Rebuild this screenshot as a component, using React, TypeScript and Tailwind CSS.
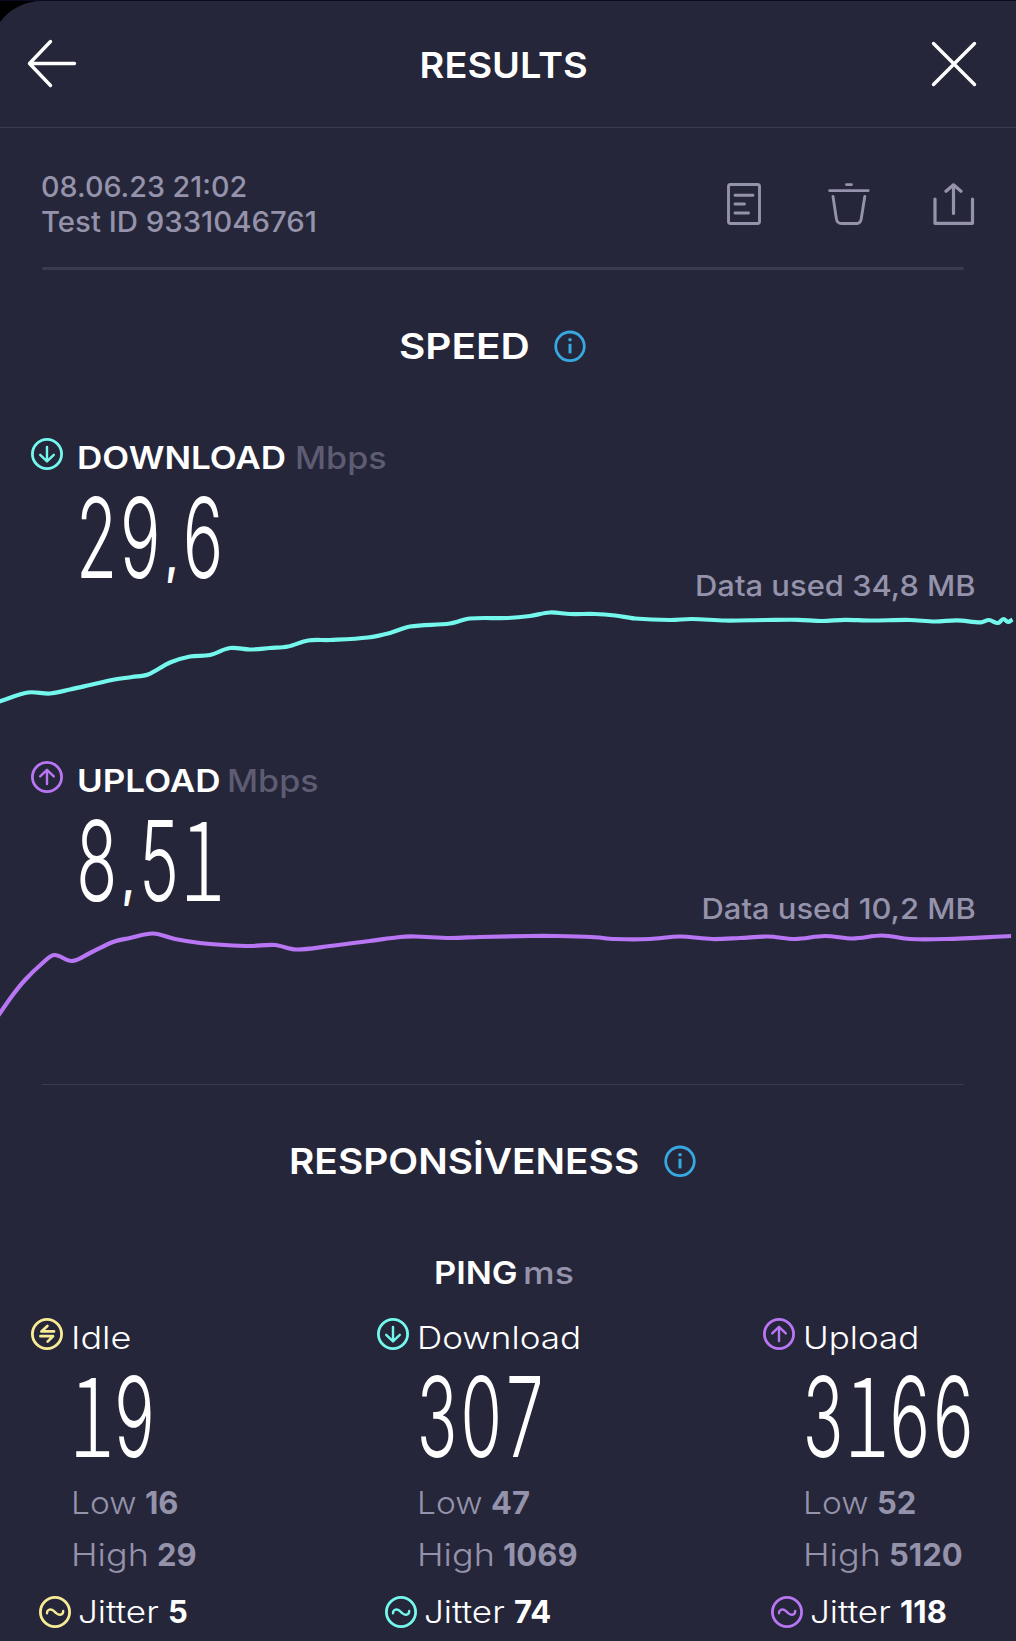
import React from 'react';
import clsx from 'clsx';

type Point = [number, number];

const DOWNLOAD_POINTS: Point[] = [
    [-2, 702], [28, 692.5], [50, 693.5], [70, 689.5], [90, 685], [112, 680], [132, 677], [148, 674.5],
    [170, 662.5], [190, 656.5], [210, 655], [230, 648], [250, 649.5], [270, 648], [288, 646.5], [308, 640.5],
    [330, 640], [368, 637.5], [390, 633], [410, 626.5], [450, 623.5], [470, 618.5], [508, 618], [530, 616],
    [550, 612.5], [570, 614], [595, 614], [615, 615.5], [635, 618.5], [670, 620], [692, 619], [725, 620.5],
    [765, 620], [798, 619.8], [822, 621], [845, 619.8], [870, 620.5], [910, 620], [935, 621.5], [957, 620.3],
    [981, 622.3], [989, 620], [998, 623], [1003.5, 619], [1008, 622], [1012.5, 619.5],
];

const UPLOAD_POINTS: Point[] = [
    [-2, 1016], [12, 996], [25, 980], [42, 963.5], [54, 955], [72, 961], [90, 953], [113, 942], [130, 938],
    [153, 933.5], [175, 939], [200, 943], [225, 945], [250, 946], [275, 945], [296, 949.5], [330, 946],
    [370, 941], [400, 937], [415, 936.5], [450, 938], [480, 937], [530, 936], [555, 936], [592, 937],
    [615, 939], [650, 939], [680, 936.5], [712, 939], [740, 938], [768, 936.5], [795, 939], [825, 936],
    [853, 938.5], [882, 935.5], [910, 939], [945, 939], [1011, 936],
];

// Horizontal-ish smoothing so the line never overshoots its samples much
function smoothPath(points: Point[]) {
    let d = `M${points[0][0]} ${points[0][1]}`;
    for (let i = 0; i < points.length - 1; i++) {
        const p0 = points[i - 1] ?? points[i];
        const p1 = points[i];
        const p2 = points[i + 1];
        const p3 = points[i + 2] ?? p2;
        const dx = (p2[0] - p1[0]) / 3;
        const m1 = (p2[1] - p0[1]) / (p2[0] - p0[0]);
        const m2 = (p3[1] - p1[1]) / (p3[0] - p1[0]);
        d += `C${p1[0] + dx} ${p1[1] + m1 * dx} ${p2[0] - dx} ${p2[1] - m2 * dx} ${p2[0]} ${p2[1]}`;
    }
    return d;
}

type IconKind = 'down' | 'up' | 'idle' | 'jitter';

const ICON_PATHS: Record<IconKind, string> = {
    down: 'M16 9v14M9.2 16.8 16 23.4l6.8-6.6',
    up: 'M16 23V9M9.2 15.4 16 8.8l6.8 6.6',
    idle: 'M23 13.4H10.4l6-5.4M9.4 18.2H22l-5.4 5.4',
    jitter: 'M8 17.2c0-4 4-5 7-2l2 1.8c3 3 7.2 2 7.2-2',
};

function CircleIcon({ kind, className }: { kind: IconKind; className?: string }) {
    return (
        <svg
            className={clsx('h-8 w-8 shrink-0', className)}
            viewBox="0 0 32 32"
            fill="none"
            stroke="currentColor"
            strokeWidth={kind === 'idle' ? 2.7 : 2.4}
            strokeLinecap="round"
            strokeLinejoin="round"
        >
            <circle cx="16" cy="16" r="14.6" strokeWidth={2.8} />
            <path d={ICON_PATHS[kind]} />
        </svg>
    );
}

function InfoIcon() {
    return (
        <svg className="h-8 w-8 shrink-0 text-[#38a8e0]" viewBox="0 0 32 32" fill="none" stroke="currentColor" strokeWidth={2.8}>
            <circle cx="16" cy="16.3" r="14.3" />
            <path d="M16 13.8v9.6" strokeWidth={3} />
            <circle cx="16" cy="9.8" r="1.8" fill="currentColor" stroke="none" />
        </svg>
    );
}

// Inter stretched a little sideways; the outer box keeps the width for the flow
function Wide({ box, className, children }: { box?: string; className: string; children: React.ReactNode }) {
    return (
        <span className={clsx('block shrink-0 whitespace-nowrap', box)}>
            <span className={clsx('inline-block origin-left', className)}>{children}</span>
        </span>
    );
}

// Condensed readout: the "1" stands on a foot and the comma is short and heavy
function BigNumber({ children }: { children: string }) {
    return (
        <span className="block h-[117px] w-0 whitespace-nowrap">
            <span className="inline-block origin-left scale-x-[0.605] text-[111px] leading-[117px] font-light tabular-nums">
                {children.split('').map((ch, i) => {
                    if (ch === '1') {
                        return (
                            <span key={i} className="inline-flex w-[70.5px] justify-center leading-[80px] font-light font-['Noto_Sans_CJK_JP',sans-serif]">
                                <span className="scale-x-[1.3]">1</span>
                            </span>
                        );
                    }
                    if (ch === ',') {
                        return (
                            <span key={i} className="inline-flex w-[32px] justify-center align-[5px] text-[52px] leading-[52px] font-bold">
                                <span className="scale-x-[1.2]">,</span>
                            </span>
                        );
                    }
                    return <span key={i}>{ch}</span>;
                })}
            </span>
        </span>
    );
}

function SpeedBlock(props: {
    kind: IconKind;
    color: string;
    label: string;
    labelBox: string;
    value: string;
    data: string;
    points: Point[];
    viewBox: string;
}) {
    return (
        <section>
            <div className="flex h-10 items-start pl-[31px]">
                <CircleIcon kind={props.kind} className={props.color} />
                <Wide box={clsx('ml-[13.5px]', props.labelBox)} className="scale-x-[1.13] text-[31px] leading-10 font-semibold">
                    {props.label}
                </Wide>
                <Wide className="scale-x-[1.1] text-[31px] leading-10 font-medium text-[#5d5c72]">Mbps</Wide>
            </div>
            <div className="flex h-[118px] items-end justify-between pl-[75px] pr-[40px]">
                <BigNumber>{props.value}</BigNumber>
                <span className="inline-block origin-right scale-x-[1.085] text-[28.5px] leading-5 font-medium text-[#9593ab]">
                    Data used {props.data} MB
                </span>
            </div>
            <svg className={clsx('block h-[165px] w-full', props.color)} viewBox={props.viewBox} fill="none">
                <path d={smoothPath(props.points)} stroke="currentColor" strokeWidth={4.2} strokeLinejoin="round" />
            </svg>
        </section>
    );
}

function StatLine({ label, labelBox, scale, value }: { label: string; labelBox: string; scale: string; value: string }) {
    return (
        <div className="flex pl-[40px] text-[31px] leading-[52px] text-[#9593ab]">
            <Wide box={labelBox} className={clsx('font-light', scale)}>{label}</Wide>
            <span className="font-bold">{value}</span>
        </div>
    );
}

function PingColumn(props: { kind: IconKind; color: string; label: string; scale: string; value: string; low: string; high: string; jitter: string }) {
    return (
        <div className="w-0">
            <div className="flex h-10 items-start">
                <CircleIcon kind={props.kind} className={props.color} />
                <Wide box="ml-[8px]" className={clsx('text-[31px] leading-10 font-light', props.scale)}>{props.label}</Wide>
            </div>
            <div className="pl-[39px]">
                <BigNumber>{props.value}</BigNumber>
            </div>
            <div className="pt-[1.5px]">
                <StatLine label="Low" labelBox="w-[74px]" scale="scale-x-[1.08]" value={props.low} />
                <StatLine label="High" labelBox="w-[86px]" scale="scale-x-[1.16]" value={props.high} />
            </div>
            <div className="mt-[15px] flex items-center pl-2 text-[31px] leading-8">
                <CircleIcon kind="jitter" className={props.color} />
                <Wide box="ml-[6.5px] w-[90.5px]" className="scale-x-[1.13] font-light">Jitter</Wide>
                <span className="font-bold">{props.jitter}</span>
            </div>
        </div>
    );
}

export default function App() {
    return (
        <div className="relative h-[1641px] w-[1016px] overflow-hidden border-t border-[#0a0a20] bg-[#252639] font-['Inter',sans-serif] text-white">
            <svg className="absolute -top-px left-0 h-[23px] w-[43px]" viewBox="0 0 43 23">
                <path d="M0 0H42V1A52 52 0 0 0 0 22Z" fill="#000" />
            </svg>

            <header className="flex h-[127px] items-center justify-between border-b border-[#3a3a50] pl-[27px] pr-[39px]">
                <svg className="h-[50px] w-[50px]" viewBox="0 0 50 50" fill="none" stroke="currentColor" strokeWidth={3.4} strokeLinecap="round" strokeLinejoin="round">
                    <path d="M47.5 24.5H3M23.5 2.5 2.5 24.5l21 22" />
                </svg>
                <h1 className="mt-px mr-px scale-x-[1.055] text-[36px] leading-[56px] font-semibold">RESULTS</h1>
                <svg className="h-[46px] w-[46px]" viewBox="0 0 46 46" fill="none" stroke="currentColor" strokeWidth={3.4} strokeLinecap="round">
                    <path d="M2.5 2.5l41 41M43.5 2.5l-41 41" />
                </svg>
            </header>

            <div className="flex items-center justify-between pt-[41px] pb-7 pl-[41px] pr-[41px] text-[#9593ab]">
                <div className="text-[28.5px] leading-[35px] font-medium">
                    <Wide className="scale-x-[1.007]">08.06.23 21:02</Wide>
                    <Wide className="scale-x-[1.03]">Test ID 9331046761</Wide>
                </div>
                <div className="flex h-[42px] items-center">
                    <svg className="h-[42px] w-[34px]" viewBox="0 0 34 42" fill="none" stroke="currentColor" strokeWidth={2.9} strokeLinecap="round">
                        <rect x="1.5" y="1.5" width="31" height="39" rx="2" />
                        <path d="M8 12.2h18M8 21h9.5M8 30h13.5" />
                    </svg>
                    <svg className="ml-[67px] h-[42px] w-[42px]" viewBox="0 0 42 42" fill="none" stroke="currentColor" strokeWidth={2.9} strokeLinecap="round" strokeLinejoin="round">
                        <path d="M18.5 1.6h5M1.6 7.6h38.6M5 13.5l3.4 22.4c.5 3 2.2 4.6 5 4.6h14.8c2.8 0 4.5-1.6 5-4.6l3.6-22.4" />
                    </svg>
                    <svg className="ml-[63px] h-[42px] w-[42px]" viewBox="0 0 42 42" fill="none" stroke="currentColor" strokeWidth={3.2} strokeLinecap="round" strokeLinejoin="round">
                        <path d="M2 16v24.3h37.5V16M20.5 30.5V2M13 8.2 20.5 1.8l7.5 6.4" />
                    </svg>
                </div>
            </div>
            <div className="mr-[52px] ml-[42px] h-[3px] rounded-full bg-[#3a3a50]" />

            <div className="mt-12 flex h-14 items-center pl-[398.5px]">
                <Wide box="w-[155.5px]" className="scale-x-[1.126] text-[36px] leading-[56px] font-semibold">SPEED</Wide>
                <InfoIcon />
            </div>

            <div className="mt-16">
                <SpeedBlock kind="down" color="text-[#74f8ee]" label="DOWNLOAD" labelBox="w-[218.5px]" value="29,6" data="34,8" points={DOWNLOAD_POINTS} viewBox="0 596 1016 165" />
                <SpeedBlock kind="up" color="text-[#b976f4]" label="UPLOAD" labelBox="w-[150.5px]" value="8,51" data="10,2" points={UPLOAD_POINTS} viewBox="0 919 1016 165" />
            </div>
            <div className="mr-[52px] ml-[42px] h-px bg-[#3a3a50]" />

            <div className="mt-12 flex h-14 items-center pl-[288.5px]">
                <Wide box="w-[375.5px]" className="scale-x-[1.08] text-[36px] leading-[56px] font-semibold">RESPONSİVENESS</Wide>
                <InfoIcon />
            </div>

            <div className="mt-16 flex pl-[434px] text-[31px] leading-10">
                <Wide box="w-[89px]" className="scale-x-[1.11] font-semibold">PING</Wide>
                <Wide className="scale-x-[1.15] font-medium text-[#9593ab]">ms</Wide>
            </div>

            <div className="mt-[25px] grid grid-cols-[346px_386px_1fr] pl-[31px]">
                <PingColumn kind="idle" color="text-[#f8eb96]" label="Idle" scale="scale-x-[1.16]" value="19" low="16" high="29" jitter="5" />
                <PingColumn kind="down" color="text-[#74f8ee]" label="Download" scale="scale-x-[1.13]" value="307" low="47" high="1069" jitter="74" />
                <PingColumn kind="up" color="text-[#b976f4]" label="Upload" scale="scale-x-[1.127]" value="3166" low="52" high="5120" jitter="118" />
            </div>
        </div>
    );
}
